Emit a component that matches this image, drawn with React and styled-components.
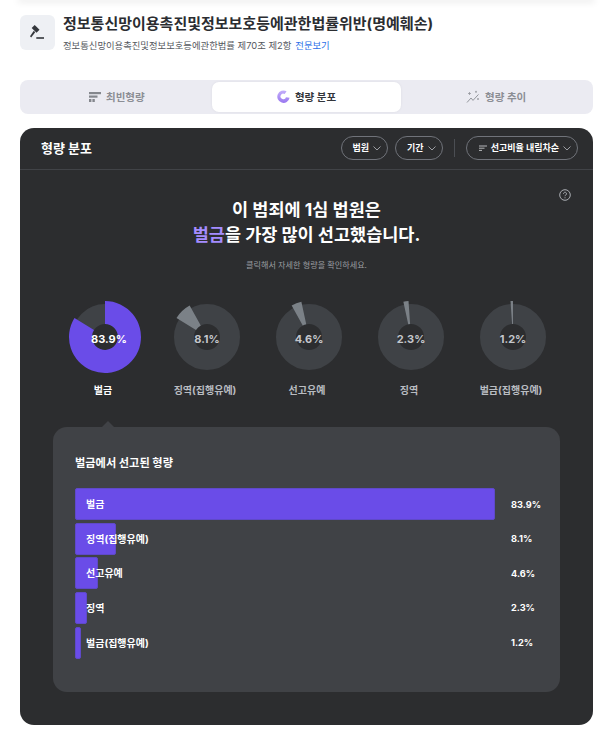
import React from 'react'
import styled, { createGlobalStyle } from 'styled-components'

const GlobalStyle = createGlobalStyle`
  html, body {
    margin: 0;
    padding: 0;
    background: #fff;
  }
  body {
    font-family: Inter, "Noto Sans CJK KR", "Noto Sans", sans-serif;
    color: #222;
  }
  * {
    box-sizing: border-box;
  }
`

const Page = styled.div`
  width: 602px;
  height: 738px;
  overflow: hidden;
  padding: 0 9px 0 20px;
`

const TopEdge = styled.div`
  height: 0;
  box-shadow: 0 0 7px 2px rgba(0, 0, 0, 0.1);
`

const Header = styled.header`
  display: flex;
  gap: 8px;
  margin-top: 15px;
  height: 35px;
`

const IconBox = styled.div`
  width: 35px;
  height: 35px;
  border-radius: 6px;
  background: #eef0f4;
  display: flex;
  align-items: center;
  justify-content: center;
  flex: none;
`

const HeaderText = styled.div`
  display: flex;
  flex-direction: column;
`

const LawTitle = styled.h1`
  margin: -1px 0 0;
  font-size: 15px;
  line-height: 20px;
  font-weight: 700;
  color: #2b2d31;
  white-space: nowrap;
`

const LawRef = styled.p`
  margin: 5px 0 0;
  font-size: 9.35px;
  line-height: 14px;
  color: #55585e;
  white-space: nowrap;
`

const LawLink = styled.a`
  color: #2b6fe8;
  margin-left: 4px;
`

const Tabs = styled.nav`
  display: grid;
  grid-template-columns: repeat(3, 1fr);
  margin-top: 30px;
  height: 34px;
  padding: 2px;
  border-radius: 8px;
  background: #ebebf2;
`

const Tab = styled.div`
  display: flex;
  align-items: center;
  justify-content: center;
  gap: 5px;
  padding-bottom: 1px;
  border-radius: 7px;
  font-size: 10.5px;
  font-weight: 700;
  color: ${p => (p.$active ? '#33363b' : '#8b8e95')};
  background: ${p => (p.$active ? '#fff' : 'transparent')};
  box-shadow: ${p => (p.$active ? '0 0 3px rgba(0, 0, 0, 0.06)' : 'none')};
`

const Panel = styled.section`
  margin-top: 14px;
  height: 597px;
  border-radius: 14px;
  background: #2c2d2f;
  color: #fff;
  overflow: hidden;
`

const PanelBar = styled.div`
  display: flex;
  align-items: center;
  height: 42px;
  padding: 0 15px 2px 21px;
  border-bottom: 1px solid #414347;
`

const PanelTitle = styled.h2`
  margin: 0 auto 0 0;
  font-size: 13px;
  font-weight: 700;
`

const Pill = styled.button`
  display: flex;
  align-items: center;
  gap: 3px;
  height: 24px;
  padding: 0 5px 0 11px;
  margin-left: 7px;
  border: 1px solid #70737a;
  border-radius: 12px;
  background: transparent;
  color: #fff;
  font-family: inherit;
  font-size: 9px;
  font-weight: 700;
  white-space: nowrap;
`

const BarDivider = styled.span`
  width: 1px;
  height: 18px;
  margin: 0 4px 0 11px;
  background: #4b4e53;
`

const Summary = styled.div`
  position: relative;
  padding-top: 27px;
  text-align: center;
`

const HelpIcon = styled.svg`
  position: absolute;
  top: 19px;
  right: 22px;
`

const Headline = styled.h3`
  margin: 0;
  font-size: 17.5px;
  line-height: 25px;
  font-weight: 700;
`

const Accent = styled.span`
  color: #a48cff;
`

const Hint = styled.p`
  margin: 12px 0 0;
  font-size: 8.1px;
  line-height: 12px;
  color: #9b9da1;
`

const Donuts = styled.div`
  display: grid;
  grid-template-columns: repeat(5, 102px);
  margin-top: 29px;
  padding-left: 34px;
`

const DonutItem = styled.div`
  display: flex;
  flex-direction: column;
  align-items: center;
`

const DonutChart = styled.div`
  position: relative;
  width: 74px;
  height: 74px;
`

const DonutValue = styled.span`
  position: absolute;
  top: 50%;
  left: ${p => (p.$active ? '8px' : '0')};
  right: 0;
  margin-top: -5px;
  text-align: center;
  font-size: 11px;
  line-height: 14px;
  font-weight: 700;
  color: ${p => (p.$active ? '#fff' : '#c3c6cb')};
`

const DonutLabel = styled.span`
  margin: 9px 4px 0 0;
  font-size: 10px;
  line-height: 14px;
  font-weight: 700;
  white-space: nowrap;
  color: ${p => (p.$active ? '#fff' : '#b9bcc1')};
`

const Detail = styled.div`
  position: relative;
  height: 265px;
  margin: 30px 33px 0;
  padding: 28px 20px 0 22px;
  border-radius: 14px;
  background: #404246;

  &::before {
    content: '';
    position: absolute;
    top: -6px;
    left: 49px;
    border-left: 6px solid transparent;
    border-right: 6px solid transparent;
    border-bottom: 6px solid #404246;
  }
`

const DetailTitle = styled.h4`
  margin: 0 0 17px;
  font-size: 11.2px;
  line-height: 16px;
  font-weight: 700;
`

const BarList = styled.div`
  display: flex;
  flex-direction: column;
  gap: 2.67px;
`

const BarRow = styled.div`
  display: flex;
  align-items: center;
  height: 32px;
`

const BarTrack = styled.div`
  position: relative;
  flex: none;
  width: 420px;
  height: 100%;
`

const BarFill = styled.div`
  height: 100%;
  border-radius: 2px;
  background: #6a4ce8;
  border: 1px solid #5f49c9;
`

const BarLabel = styled.span`
  position: absolute;
  top: 0;
  left: 11px;
  font-size: 10px;
  line-height: 32px;
  font-weight: 700;
  white-space: nowrap;
`

const BarValue = styled.span`
  margin-left: 16px;
  font-size: 9.2px;
  font-weight: 700;
`

const data = [
  { name: '벌금', value: 83.9 },
  { name: '징역(집행유예)', value: 8.1 },
  { name: '선고유예', value: 4.6 },
  { name: '징역', value: 2.3 },
  { name: '벌금(집행유예)', value: 1.2 },
]

const point = (r, deg) => {
  const a = ((deg - 90) * Math.PI) / 180
  return `${(37 + r * Math.cos(a)).toFixed(2)} ${(37 + r * Math.sin(a)).toFixed(2)}`
}

const slice = (from, to, outer, inner) => {
  const large = to - from > 180 ? 1 : 0
  return `M${point(outer, from)}A${outer} ${outer} 0 ${large} 1 ${point(outer, to)}L${point(inner, to)}A${inner} ${inner} 0 ${large} 0 ${point(inner, from)}Z`
}

function Donut({ start, value, active }) {
  const from = (start / 100) * 360
  const to = Math.min(((start + value) / 100) * 360, 359.99)
  return (
    <svg width="74" height="74" viewBox="0 0 74 74">
      <circle cx="37" cy="37" r="23" fill="none" stroke="#3f4246" strokeWidth="20" />
      <path d={slice(from, to, 36, 13)} fill={active ? '#6a4ce8' : '#7b8187'} />
    </svg>
  )
}

function GavelIcon() {
  return (
    <svg width="15" height="15" viewBox="0 0 15 15" fill="#34373c">
      <path d="M4.7 0 9.5 4.8 6.5 7.8 1.7 3z" />
      <path d="M3.8 5.8 5.2 7.2 1.2 12.5 0 11.3z" />
      <rect x="6.3" y="12.2" width="7.7" height="1.6" />
    </svg>
  )
}

function BarsIcon() {
  return (
    <svg width="12" height="12" viewBox="0 0 12 12" fill="#84878d">
      <rect x="0" y="1" width="12" height="2.2" />
      <rect x="0" y="4.5" width="8.5" height="2.2" />
      <rect x="0" y="8" width="2.4" height="3" />
      <rect x="3.4" y="8" width="2.4" height="3" />
    </svg>
  )
}

function PieIcon() {
  return (
    <svg width="13" height="13" viewBox="0 0 13 13">
      <defs>
        <linearGradient id="pieFill" x1="0" y1="0" x2="0" y2="1">
          <stop offset="0" stopColor="#c3aefa" />
          <stop offset="1" stopColor="#9a78f0" />
        </linearGradient>
      </defs>
      <path
        d="M9.6 1.3A6.2 6.2 0 1 0 12.6 7.8L9 7.2A2.8 2.8 0 1 1 7.6 3.9z"
        fill="url(#pieFill)"
      />
    </svg>
  )
}

function TrendIcon() {
  return (
    <svg width="14" height="14" viewBox="0 0 14 14" fill="none" stroke="#94979d" strokeWidth="1">
      <path d="M1 12.5 5 8l2 2.4 5.5-6" />
      <path d="M3.5 2v3M2 3.5h3M10 .8v2M9 1.8h2M12 8v2M11 9h2" strokeWidth="0.8" />
    </svg>
  )
}

function Chevron() {
  return (
    <svg width="10" height="10" viewBox="0 0 10 10" fill="none" stroke="#a9acb1" strokeWidth="0.9">
      <path d="M1.5 3.5 5 7l3.5-3.5" />
    </svg>
  )
}

function SortIcon() {
  return (
    <svg width="10" height="10" viewBox="0 0 10 10" fill="none" stroke="#c5c7cb" strokeWidth="0.9">
      <path d="M1 3h8M1 5.2h5.5M1 7.4h3" />
    </svg>
  )
}

export default function App() {
  let running = 0
  const donuts = data.map(d => {
    const start = running
    running += d.value
    return { ...d, start }
  })

  return (
    <>
      <GlobalStyle />
      <Page>
        <TopEdge />
        <Header>
          <IconBox>
            <GavelIcon />
          </IconBox>
          <HeaderText>
            <LawTitle>정보통신망이용촉진및정보보호등에관한법률위반(명예훼손)</LawTitle>
            <LawRef>
              정보통신망이용촉진및정보보호등에관한법률 제70조 제2항
              <LawLink>전문보기</LawLink>
            </LawRef>
          </HeaderText>
        </Header>

        <Tabs>
          <Tab>
            <BarsIcon />
            최빈형량
          </Tab>
          <Tab $active>
            <PieIcon />
            형량 분포
          </Tab>
          <Tab>
            <TrendIcon />
            형량 추이
          </Tab>
        </Tabs>

        <Panel>
          <PanelBar>
            <PanelTitle>형량 분포</PanelTitle>
            <Pill>법원 <Chevron /></Pill>
            <Pill>기간 <Chevron /></Pill>
            <BarDivider />
            <Pill>
              <SortIcon />
              선고비율 내림차순
              <Chevron />
            </Pill>
          </PanelBar>

          <Summary>
            <HelpIcon width="12" height="12" viewBox="0 0 12 12" fill="none" stroke="#a9acb1">
              <circle cx="6" cy="6" r="5.3" />
              <path d="M4.5 4.7a1.5 1.5 0 1 1 2.3 1.3c-.5.3-.8.6-.8 1.2M6 8.3v1" />
            </HelpIcon>
            <Headline>이 범죄에 1심 법원은</Headline>
            <Headline>
              <Accent>벌금</Accent>을 가장 많이 선고했습니다.
            </Headline>
            <Hint>클릭해서 자세한 형량을 확인하세요.</Hint>
          </Summary>

          <Donuts>
            {donuts.map((d, i) => (
              <DonutItem key={d.name}>
                <DonutChart>
                  <Donut start={d.start} value={d.value} active={i === 0} />
                  <DonutValue $active={i === 0}>{d.value}%</DonutValue>
                </DonutChart>
                <DonutLabel $active={i === 0}>{d.name}</DonutLabel>
              </DonutItem>
            ))}
          </Donuts>

          <Detail>
            <DetailTitle>벌금에서 선고된 형량</DetailTitle>
            <BarList>
              {data.map(d => (
                <BarRow key={d.name}>
                  <BarTrack>
                    <BarFill style={{ width: `${(d.value / 83.9) * 100}%` }} />
                    <BarLabel>{d.name}</BarLabel>
                  </BarTrack>
                  <BarValue>{d.value}%</BarValue>
                </BarRow>
              ))}
            </BarList>
          </Detail>
        </Panel>
      </Page>
    </>
  )
}
